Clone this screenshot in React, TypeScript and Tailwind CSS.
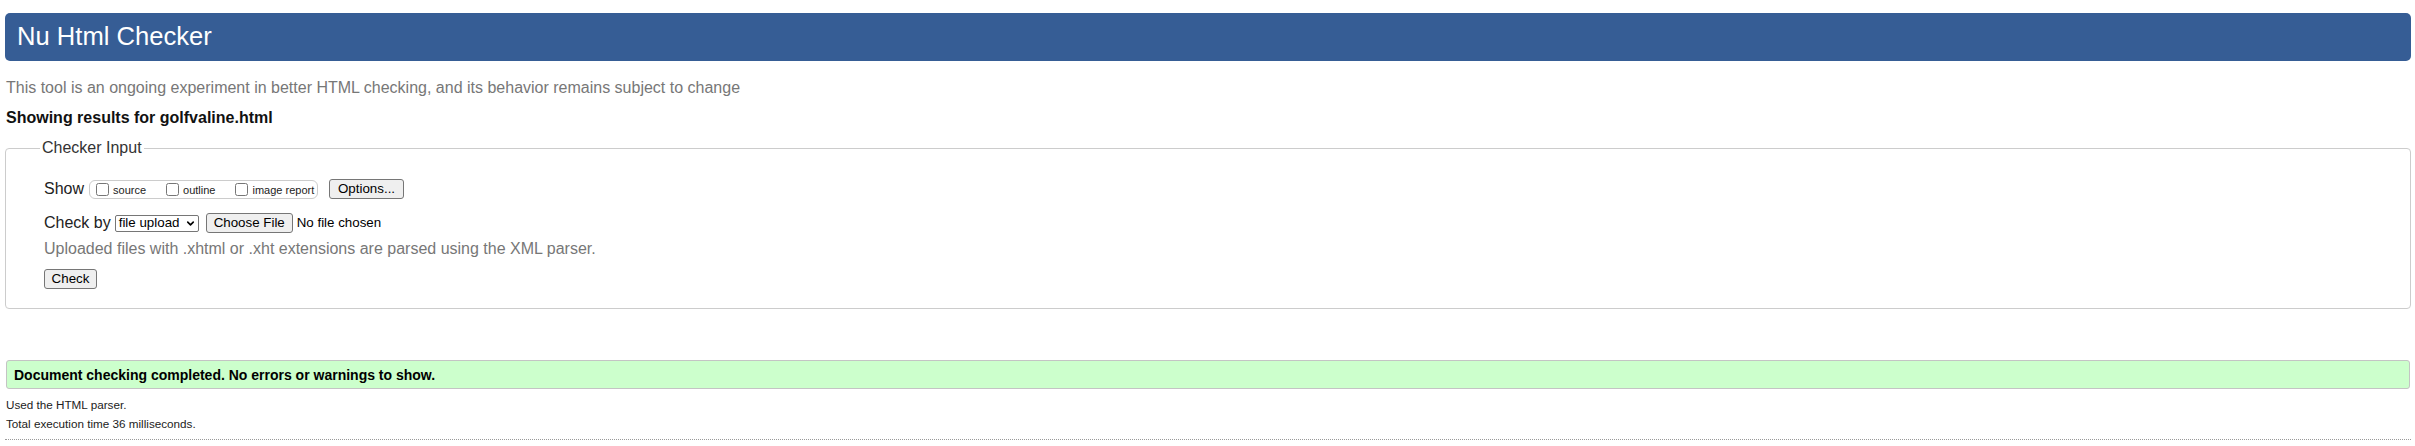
import { ChevronDown } from 'lucide-react'

const font = { fontFamily: '"Liberation Sans", Arial, sans-serif' }

function NativeButton({ label, w }: { label: string; w: string }) {
  return (
    <button
      type="button"
      className={`${w} h-[20px] flex items-center justify-center bg-[#efefef] border border-[#767676] rounded-[3px] text-[13.33px] leading-none text-black`}
    >
      {label}
    </button>
  )
}

function Check({ label }: { label: string }) {
  return (
    <label className="flex items-center">
      <input type="checkbox" className="m-0 w-[13px] h-[13px]" />
      <span className="ml-[4px] text-[11px] leading-none text-[#222] mt-[2px]">{label}</span>
    </label>
  )
}

export default function App() {
  return (
    <div className="bg-white w-[2415px] h-[446px] pl-[5px] pr-[4px] overflow-hidden" style={font}>
      <header className="mt-[13px] h-[48px] bg-[#365d95] rounded-[5px] pl-[12px] flex items-center">
        <h1 className="text-[25.6px] leading-none text-white">Nu Html Checker</h1>
      </header>

      <p className="mt-[18px] pl-[1px] text-[16px] leading-[18px] text-[#777]">
        This tool is an ongoing experiment in better HTML checking, and its behavior remains subject to change
      </p>
      <p className="mt-[12px] pl-[1px] text-[16px] leading-[18px] font-bold text-[#111]">
        Showing results for golfvaline.html
      </p>

      <fieldset className="mt-[12px] border border-[#ccc] rounded-[4px] pl-[38px] pb-[19px]">
        <legend className="ml-[-4px] px-[2px] text-[16px] leading-[18px] text-[#333]">Checker Input</legend>

        <div className="mt-[22px] h-[20px] flex items-center">
          <span className="text-[16px] leading-none text-[#222]">Show</span>
          <div className="ml-[5px] h-[19px] w-[229px] border border-[#ccc] rounded-[6px] flex items-center pl-[6px]">
            <Check label="source" />
            <div className="w-[20px]" />
            <Check label="outline" />
            <div className="w-[20px]" />
            <Check label="image report" />
          </div>
          <div className="ml-[11px]">
            <NativeButton label="Options..." w="w-[75px]" />
          </div>
        </div>

        <div className="mt-[14px] h-[20px] flex items-center">
          <span className="text-[16px] leading-none text-[#222]">Check by</span>
          <div className="ml-[4px] w-[84px] h-[17px] border border-[#767676] rounded-[2px] flex items-center justify-between pl-[3px] pr-[2px]">
            <span className="text-[13.33px] leading-none text-black">file upload</span>
            <ChevronDown size={11} strokeWidth={3.5} className="text-black" />
          </div>
          <div className="ml-[7px]">
            <NativeButton label="Choose File" w="w-[87px]" />
          </div>
          <span className="ml-[4px] text-[13.33px] leading-none text-black">No file chosen</span>
        </div>

        <p className="mt-[7px] text-[16px] leading-[18px] text-[#777]">
          Uploaded files with .xhtml or .xht extensions are parsed using the XML parser.
        </p>

        <div className="mt-[11px]">
          <NativeButton label="Check" w="w-[53px]" />
        </div>
      </fieldset>

      <div className="mt-[51px] mx-[1px] h-[29px] bg-[#ccffcc] border border-[#c4c4c4] rounded-[3px] flex items-center pl-[7px]">
        <span className="text-[14px] leading-none font-bold text-black">
          Document checking completed. No errors or warnings to show.
        </span>
      </div>

      <p className="mt-[8px] pl-[1px] text-[11.7px] leading-[15px] text-[#222]">Used the HTML parser.</p>
      <p className="mt-[4px] pl-[1px] text-[11.7px] leading-[15px] text-[#222]">Total execution time 36 milliseconds.</p>

      <div className="mt-[8px] border-t border-dotted border-[#999]" />
    </div>
  )
}
